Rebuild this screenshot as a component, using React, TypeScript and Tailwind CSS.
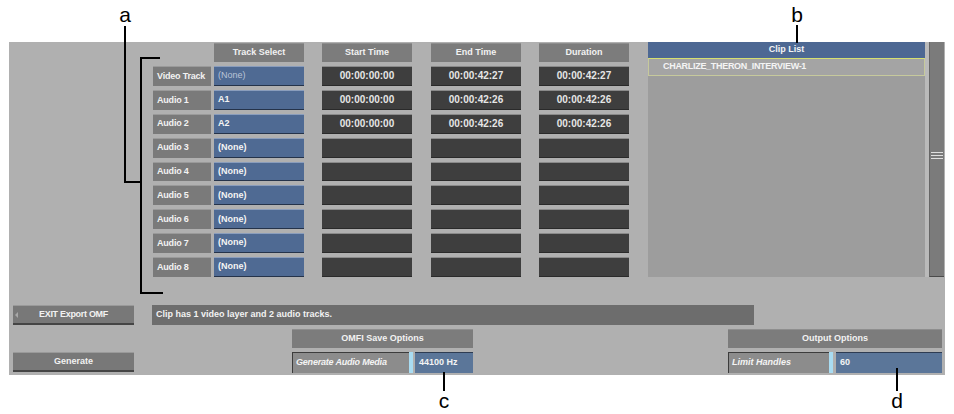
import React from 'react';

const rows = [
  { label: 'Video Track', track: '(None)', dim: true, start: '00:00:00:00', end: '00:00:42:27', dur: '00:00:42:27' },
  { label: 'Audio 1', track: 'A1', start: '00:00:00:00', end: '00:00:42:26', dur: '00:00:42:26' },
  { label: 'Audio 2', track: 'A2', start: '00:00:00:00', end: '00:00:42:26', dur: '00:00:42:26' },
  { label: 'Audio 3', track: '(None)' },
  { label: 'Audio 4', track: '(None)' },
  { label: 'Audio 5', track: '(None)' },
  { label: 'Audio 6', track: '(None)' },
  { label: 'Audio 7', track: '(None)' },
  { label: 'Audio 8', track: '(None)' },
];

function Header({ text, className = '' }: { text: string; className?: string }) {
  return (
    <div className={`flex items-center justify-center bg-[#7c7c7c] border-t border-[#8e8e8e] text-[9px] font-bold text-[#f2f2f2] ${className}`}>
      {text}
    </div>
  );
}

function TimeCell({ value, className = '' }: { value?: string; className?: string }) {
  return (
    <div className={`w-[90px] flex items-center justify-center bg-[#3e3e3e] border-t border-[#8a8a8a] border-b border-b-[#2a2a2a] text-[10px] font-bold text-[#e6e6e6] ${className}`}>
      {value}
    </div>
  );
}

function Annotation({ letter, x, y }: { letter: string; x: number; y: number }) {
  return (
    <div
      className="absolute w-[20px] -ml-[10px] text-center text-[21px] leading-none text-black"
      style={{ left: x, top: y }}
    >
      {letter}
    </div>
  );
}

export default function App() {
  return (
    <div className="relative w-[954px] h-[414px] bg-white overflow-hidden font-['Liberation_Sans',Arial,sans-serif]">
      <div className="pt-[42px] pl-[9px]">
        <div className="w-[936px] h-[333px] bg-[#b0b0b0] flex flex-col">
          {/* top section */}
          <div className="flex h-[235px]">
            <div className="ml-[144px] mt-px flex flex-col gap-1">
              <div className="flex h-[19px]">
                <div className="w-[58px]" />
                <Header text="Track Select" className="ml-[3px] w-[90px]" />
                <Header text="Start Time" className="ml-[18px] w-[90px]" />
                <Header text="End Time" className="ml-[19px] w-[90px]" />
                <Header text="Duration" className="ml-[18px] w-[90px]" />
              </div>
              {rows.map((r) => (
                <div key={r.label} className="flex h-[20px]">
                  <div className="w-[58px] flex items-center pl-1 bg-[#7a7a7a] border-t border-[#9a9a9a] text-[9px] font-bold text-[#f2f2f2] tracking-[-0.2px] whitespace-nowrap">
                    {r.label}
                  </div>
                  <div
                    className={`ml-[3px] w-[90px] flex items-center pl-1 bg-[#4f6a93] border-t border-[#8a9dbc] border-b border-b-[#25334a] text-[9px] font-bold ${
                      r.dim ? 'text-[#b9c4d6] font-normal' : 'text-[#f4f4f4]'
                    }`}
                  >
                    {r.track}
                  </div>
                  <TimeCell value={r.start} className="ml-[18px]" />
                  <TimeCell value={r.end} className="ml-[19px]" />
                  <TimeCell value={r.dur} className="ml-[18px]" />
                </div>
              ))}
            </div>

            {/* clip list */}
            <div className="ml-[19px] w-[277px] flex flex-col bg-[#9d9d9d]">
              <div className="h-[16px] flex items-center justify-center bg-[#4d6893] text-[9px] font-bold text-[#f4f4f4]">
                Clip List
              </div>
              <div className="h-[18px] flex items-center pl-[14px] bg-[#a4a4a4] border border-[#c6c99c] border-t-[#d6e070] text-[9px] font-bold text-[#f4f4f4] tracking-[-0.3px]">
                CHARLIZE_THERON_INTERVIEW-1
              </div>
            </div>
            <div className="w-[4px] bg-[#bababa]" />
            <div className="w-[15px] bg-[#7b7b7b] border-l border-[#666] border-b border-b-[#4a4a4a] flex flex-col items-center">
              <div className="mt-[110px] w-[12px] flex flex-col gap-[2px]">
                <div className="h-px bg-[#e0e0e0]" />
                <div className="h-px bg-[#e0e0e0]" />
                <div className="h-px bg-[#e0e0e0]" />
              </div>
            </div>
          </div>

          {/* bottom section */}
          <div className="mt-[28px] flex h-[20px]">
            <div className="relative ml-[4px] w-[121px] flex items-center justify-center bg-[#787878] border-t border-[#9a9a9a] border-b-2 border-b-[#454545] text-[9px] font-bold text-[#f2f2f2] tracking-[-0.3px]">
              <span className="absolute left-[2px] top-[6px] w-0 h-0 border-y-[3px] border-y-transparent border-r-[3px] border-r-[#a8a8a8]" />
              EXIT Export OMF
            </div>
            <div className="ml-[18px] w-[602px] flex items-center pl-[4px] bg-[#6d6d6d] text-[9px] font-bold text-[#f2f2f2]">
              Clip has 1 video layer and 2 audio tracks.
            </div>
          </div>

          <div className="mt-[4px] flex h-[19px]">
            <Header text="OMFI Save Options" className="ml-[283px] w-[181px]" />
            <Header text="Output Options" className="ml-[255px] w-[214px]" />
          </div>

          <div className="mt-[4px] flex h-[21px]">
            <div className="ml-[4px] w-[121px] h-[20px] flex items-center justify-center bg-[#787878] border-t border-[#9a9a9a] border-b-2 border-b-[#454545] text-[9px] font-bold text-[#f2f2f2]">
              Generate
            </div>
            <div className="ml-[158px] flex">
              <div className="w-[117px] flex items-center pl-[3px] bg-[#8c8c8c] border-t border-l border-[#3c3c3c] text-[9px] font-bold italic text-[#f4f4f4] tracking-[-0.2px]">
                Generate Audio Media
              </div>
              <div className="w-[4px] bg-[#a9dcf2]" />
              <div className="ml-[2px] w-[58px] flex items-center pl-[4px] bg-[#5b7699] border-t border-[#2e3c52] text-[9px] font-bold text-[#f4f4f4]">
                44100 Hz
              </div>
            </div>
            <div className="ml-[255px] flex">
              <div className="w-[101px] flex items-center pl-[3px] bg-[#8c8c8c] border-t border-l border-[#3c3c3c] text-[9px] font-bold italic text-[#f4f4f4]">
                Limit Handles
              </div>
              <div className="w-[4px] bg-[#a9dcf2]" />
              <div className="ml-[3px] w-[106px] flex items-center pl-[4px] bg-[#5b7699] border-t border-[#2e3c52] text-[9px] font-bold text-[#f4f4f4]">
                60
              </div>
            </div>
          </div>
        </div>
      </div>

      {/* callouts */}
      <Annotation letter="a" x={125} y={4} />
      <div className="absolute left-[124px] top-[26px] w-[2px] h-[157px] bg-black" />
      <div className="absolute left-[124px] top-[181px] w-[17px] h-[2px] bg-black" />
      <div className="absolute left-[140px] top-[57px] w-[2px] h-[237px] bg-black" />
      <div className="absolute left-[140px] top-[57px] w-[20px] h-[2px] bg-black" />
      <div className="absolute left-[140px] top-[292px] w-[23px] h-[2px] bg-black" />

      <Annotation letter="b" x={797} y={4} />
      <div className="absolute left-[796px] top-[25px] w-[2px] h-[18px] bg-black" />

      <div className="absolute left-[443px] top-[372px] w-[2px] h-[19px] bg-black" />
      <Annotation letter="c" x={444} y={390} />

      <div className="absolute left-[896px] top-[368px] w-[2px] h-[23px] bg-black" />
      <Annotation letter="d" x={897} y={390} />
    </div>
  );
}
